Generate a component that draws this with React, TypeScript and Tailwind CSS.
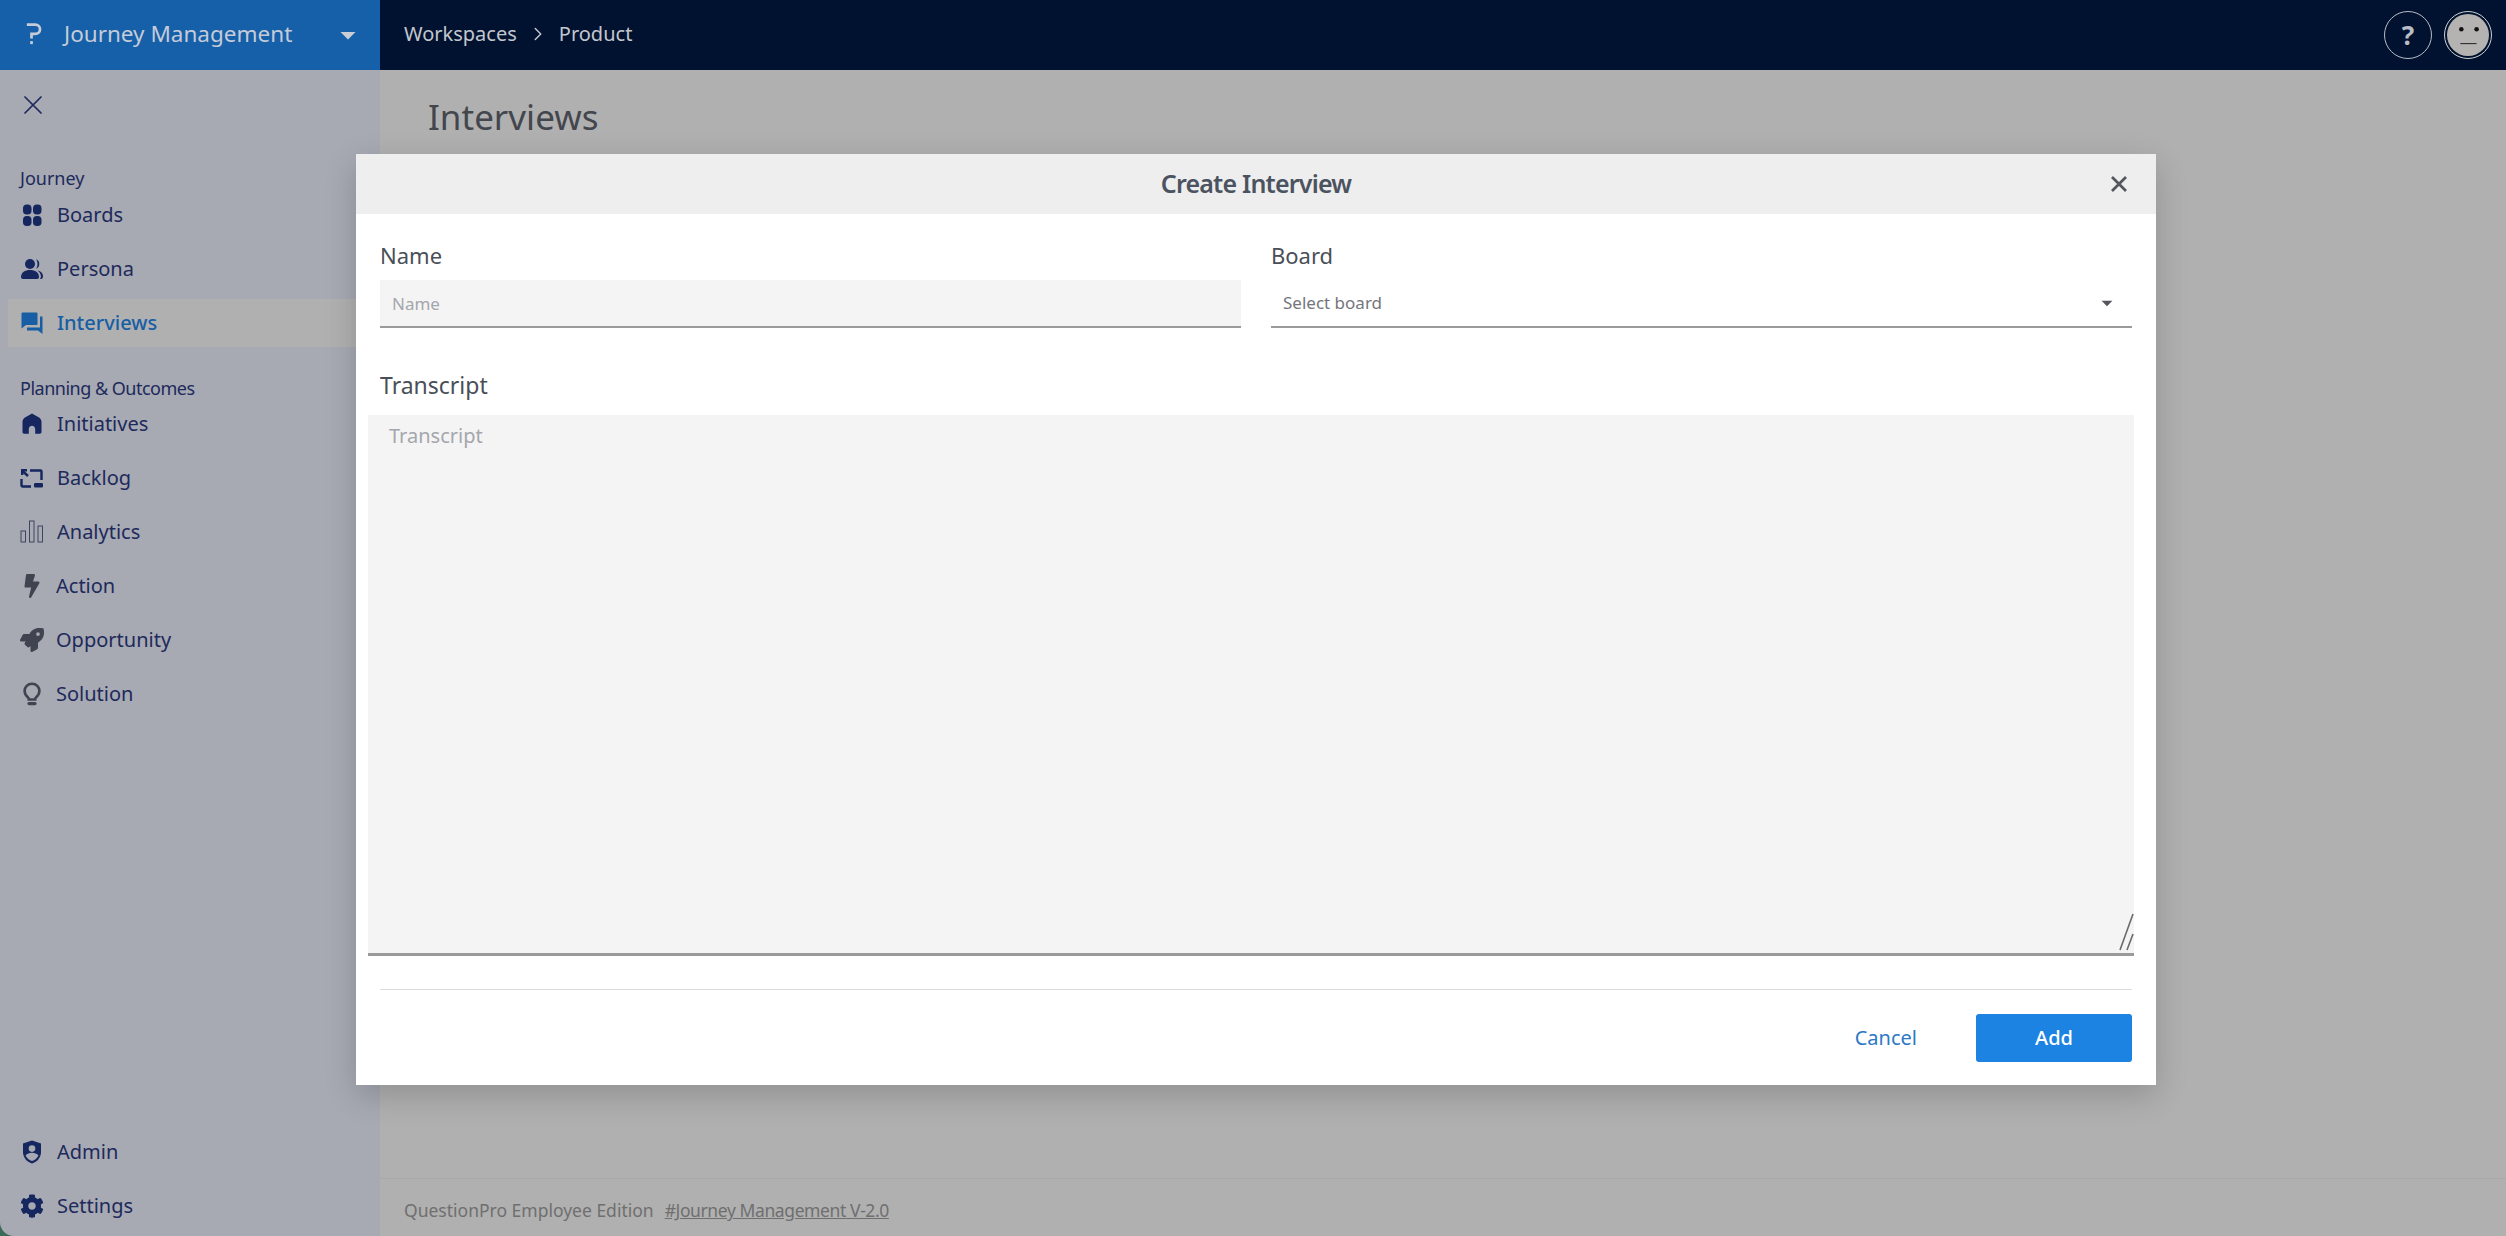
import React from "react";
import { MdArrowDropDown } from "react-icons/md";
import { FaBolt, FaRocket, FaCog } from "react-icons/fa";
import { LuX, LuChevronRight } from "react-icons/lu";

const BoardsIcon = () => (
  <svg viewBox="0 0 24 24" className="w-[24px] h-[24px]" fill="#16265f">
    <rect x="3" y="1.500" width="8.500" height="10" rx="3.800" />
    <rect x="13" y="1.500" width="8.500" height="10" rx="3.800" />
    <rect x="3" y="13" width="8.500" height="10" rx="3.800" />
    <rect x="13" y="13" width="8.500" height="10" rx="3.800" />
  </svg>
);
const PersonaIcon = () => (
  <svg viewBox="0 0 24 24" className="w-[26px] h-[26px]" fill="#16265f">
    <circle cx="10" cy="7" r="5" />
    <path d="M16 2.300a5 5 0 0 1 0 9.400c1-1.300 1.500-2.900 1.500-4.700S17 3.600 16 2.300z" />
    <path d="M1 20c0-4.500 4-7 9-7s9 2.500 9 7c0 1.300-.8 2-2 2H3c-1.200 0-2-.7-2-2z" />
    <path d="M17.500 13.400c3.300.5 5.500 2.600 5.500 5.800 0 1.600-.7 2.800-2 2.800h-1c.6-.7.900-1.500.900-2.500 0-2.500-1.200-4.500-3.400-6.100z" />
  </svg>
);
const ForumIcon = () => (
  <svg viewBox="0 0 24 24" className="w-[26px] h-[26px]" fill="#175ea5">
    <path d="M1.500 2.500a1 1 0 0 1 1-1h14a1 1 0 0 1 1 1v10.500a1 1 0 0 1-1 1H6l-4.500 3.500z" />
    <path d="M20 5.500h2.500v17.500l-4.500-3.500H7v-3h13z" />
  </svg>
);
const HomeIcon = () => (
  <svg viewBox="0 0 24 24" className="w-[24px] h-[24px]" fill="#16265f">
    <path d="M12 1.500 5 5.500C3.500 6.500 2.500 8 2.500 10v10c0 1 .7 1.700 1.700 1.700h4.600V17c0-1.800 1.400-3.200 3.200-3.200s3.200 1.400 3.200 3.200v4.700h4.600c1 0 1.700-.7 1.700-1.700V10c0-2-1-3.500-2.500-4.500z" />
  </svg>
);
const BacklogIcon = () => (
  <svg viewBox="0 0 24 24" className="w-[24px] h-[24px]" fill="none" stroke="#16265f" strokeWidth="2.400">
    <path d="M10 4.500h10.500a1 1 0 0 1 1 1V14" />
    <path d="M1.500 13v6a1.500 1.500 0 0 0 1.500 1.500h8" />
    <path d="M2.500 5l5.500 5" />
    <path d="M1 3h6v2.400H3.400V9H1z" fill="#16265f" stroke="none" />
    <rect x="14" y="17" width="9" height="4.500" rx="1.200" fill="#16265f" stroke="none" />
  </svg>
);
const BarsIcon = () => (
  <svg viewBox="0 0 24 24" className="w-[24px] h-[24px]" fill="none" stroke="#3d4660" strokeWidth="1">
    <rect x="1" y="11" width="4.500" height="11" />
    <rect x="9.500" y="1" width="4.500" height="21" />
    <rect x="18" y="6" width="4.500" height="16" />
  </svg>
);
const BulbIcon = () => (
  <svg viewBox="0 0 24 24" className="w-[24px] h-[24px]" fill="none" stroke="#3f4450" strokeWidth="2.600">
    <path d="M12 1.800c-4.300 0-7.400 3.200-7.400 7.200 0 2.800 1.500 4.600 3.200 6.200.7.700 1 1.300 1 2.300h6.400c0-1 .3-1.600 1-2.300 1.700-1.600 3.200-3.400 3.200-6.200 0-4-3.100-7.200-7.400-7.200z" />
    <path d="M9 21.600h6" strokeWidth="3.200" strokeLinecap="round" />
  </svg>
);
const AdminIcon = () => (
  <svg viewBox="0 0 24 24" className="w-[24px] h-[24px]">
    <path fill="#16265f" d="M12 .5 3 3.500v8.500c0 5.400 3.800 10 9 11.500 5.200-1.500 9-6.100 9-11.500V3.500z" />
    <circle cx="12" cy="8.600" r="3.300" fill="#a7a9b3" />
    <path fill="#a7a9b3" d="M5.500 15.500c1.500-2 4-2.800 6.500-2.800s5 .8 6.500 2.800c-1.300 2.600-3.700 4.700-6.500 5.500-2.800-.8-5.200-2.900-6.500-5.500z" />
  </svg>
);

const Row = ({ icon, label, active, gap }: { icon: React.ReactNode; label: string; active?: boolean; gap?: string }) => (
  <div className="flex items-center h-[54px] pl-[20px]">
    <div className={`flex items-center h-[48px] w-full -ml-[12px] pl-[12px] ${active ? "bg-[#b0b0b0] text-[#175ea5] font-medium" : "text-[#1d2a5b]"}`}>
      <span className="w-[24px] h-[24px] flex items-center justify-center shrink-0">{icon}</span>
      <span className={`text-[20px] leading-none ${gap ?? "ml-[13px]"}`}>{label}</span>
    </div>
  </div>
);

export default function App() {
  return (
    <div className="relative w-[2506px] h-[1236px] overflow-hidden flex flex-col bg-[#b0b0b0] font-['Noto_Sans',sans-serif]">
      <header className="h-[70px] flex shrink-0 bg-[#00122f]">
        <div className="w-[380px] bg-[#1560a8] flex items-center pl-[26px] pr-[20px] text-[#c5cbd8]">
          <svg viewBox="0 0 20 26" className="w-[17px] h-[23px] mr-[21px] -mt-[3px]" fill="none" stroke="#c5cbd8" strokeWidth="3.200">
            <path d="M1 2.500h10a5.500 5.500 0 0 1 0 11H6.500V19" />
            <path d="M6.500 22v3.500" />
          </svg>
          <span className="text-[22.500px] leading-none -mt-[2px]">Journey Management</span>
          <MdArrowDropDown className="ml-auto w-[36px] h-[36px] -mr-[6px] text-[#c9cdd6]" />
        </div>
        <div className="flex items-center pl-[24px] text-[#c3c6cd] text-[20px] -mt-[2px]">
          <span>Workspaces</span>
          <LuChevronRight className="w-[22px] h-[22px] mx-[10px]" strokeWidth={1.6} />
          <span>Product</span>
        </div>
        <div className="ml-auto flex items-center gap-[12px] pr-[14px]">
          <div className="w-[48px] h-[48px] rounded-full border border-[#b8bcc4] flex items-center justify-center text-[#b9bdc6] text-[26px] font-bold">?</div>
          <div className="w-[48px] h-[48px] rounded-full border border-[#d0d0d0] p-[2px]">
            <svg viewBox="0 0 44 44" className="w-full h-full">
              <circle cx="22" cy="22" r="22" fill="#b4b3b1" />
              <circle cx="15" cy="16" r="2.400" fill="#111" />
              <circle cx="31" cy="16" r="2.400" fill="#111" />
              <path d="M14 31h17" stroke="#333" strokeWidth="1.200" />
            </svg>
          </div>
        </div>
      </header>

      <div className="flex flex-1 min-h-0">
        <aside className="w-[380px] shrink-0 bg-[#3a6b58]">
          <div className="h-full flex flex-col bg-[#a7a9b3] rounded-bl-[14px] pb-[3px]">
            <div className="h-[68px] pl-[17px] pt-[19px]">
              <LuX className="w-[32px] h-[32px] text-[#1d2a5b]" strokeWidth={1.300} />
            </div>
            <div className="text-[18px] leading-none text-[#1d2a5b] pl-[20px] mt-[31px] mb-[1px]">Journey</div>
            <Row icon={<BoardsIcon />} label="Boards" gap="ml-[13px]" />
            <Row icon={<PersonaIcon />} label="Persona" gap="ml-[13px]" />
            <Row icon={<ForumIcon />} label="Interviews" active gap="ml-[13px]" />
            <div className="text-[18px] leading-none text-[#1d2a5b] pl-[20px] mt-[29px] tracking-[-0.500px]">Planning &amp; Outcomes</div>
            <Row icon={<HomeIcon />} label="Initiatives" gap="ml-[13px]" />
            <Row icon={<BacklogIcon />} label="Backlog" gap="ml-[13px]" />
            <Row icon={<BarsIcon />} label="Analytics" gap="ml-[13px]" />
            <Row icon={<FaBolt className="w-[22px] h-[24px] text-[#3f4450]" />} label="Action" gap="ml-[12px]" />
            <Row icon={<FaRocket className="w-[24px] h-[24px] text-[#3f4450]" />} label="Opportunity" gap="ml-[12px]" />
            <Row icon={<BulbIcon />} label="Solution" gap="ml-[12px]" />
            <div className="mt-auto" />
            <Row icon={<AdminIcon />} label="Admin" gap="ml-[13px]" />
            <Row icon={<FaCog className="w-[24px] h-[24px] text-[#16265f]" />} label="Settings" gap="ml-[13px]" />
          </div>
        </aside>
        <main className="flex-1 flex flex-col min-w-0">
          <div className="flex-1 pl-[48px] pt-[25px]">
            <h1 className="text-[35px] leading-[44px] text-[#43464d]">Interviews</h1>
          </div>
          <footer className="h-[58px] border-t border-[#a9a9a9] flex items-center pt-[6px] pl-[24px] text-[17.500px] text-[#6f6f6f]">
            <span>QuestionPro Employee Edition</span>
            <span className="ml-[11px] underline tracking-[-0.400px]">#Journey Management V-2.0</span>
          </footer>
        </main>
      </div>

      <div className="absolute left-[356px] top-[154px] w-[1800px] h-[931px] bg-white flex flex-col shadow-[0_10px_30px_rgba(0,0,0,0.18)]">
        <div className="h-[60px] bg-[#eeeeee] relative flex items-center justify-center shrink-0">
          <span className="text-[25px] font-semibold tracking-[-0.800px] text-[#4c5360]">Create Interview</span>
          <svg viewBox="0 0 16 16" className="absolute right-[29px] top-[22px] w-[16px] h-[16px]" fill="none" stroke="#53565c" strokeWidth="2.800">
            <path d="M1 1l14 14M15 1 1 15" />
          </svg>
        </div>
        <div className="flex-1 flex flex-col px-[24px]">
          <div className="flex gap-[30px] mt-[26px]">
            <label className="flex-1 flex flex-col">
              <span className="text-[22px] leading-[30px] text-[#4a4f57] mb-[10px]">Name</span>
              <input placeholder="Name" className="h-[48px] bg-[#f4f4f4] border-b-2 border-[#9a9a9a] px-[12px] text-[17px] outline-none placeholder:text-[#a4a6ad]" />
            </label>
            <label className="flex-1 flex flex-col">
              <span className="text-[22px] leading-[30px] text-[#4a4f57] mb-[10px]">Board</span>
              <div className="h-[48px] border-b-2 border-[#9a9a9a] px-[12px] flex items-center justify-between text-[17px] text-[#74767c]">
                <span>Select board</span>
                <MdArrowDropDown className="w-[26px] h-[26px] text-[#53565c] mr-[0px]" />
              </div>
            </label>
          </div>
          <span className="text-[23px] leading-[30px] text-[#4a4f57] mt-[42px] mb-[15px]">Transcript</span>
          <div className="relative -ml-[12px] -mr-[2px]">
            <textarea placeholder="Transcript" className="block w-full h-[541px] bg-[#f4f4f4] border-b-[3px] border-[#9a9a9a] px-[21px] py-[6px] text-[20px] leading-[30px] resize-none outline-none placeholder:text-[#a4a6ad]" />
            <svg viewBox="0 0 16 40" className="absolute right-0 bottom-[4px] w-[16px] h-[40px]" fill="none" stroke="#6a6a6a" strokeWidth="1.600">
              <path d="M2 38 15 2M9 38l6-16" />
            </svg>
          </div>
          <div className="mt-[33px] border-t border-[#dcdcdc]" />
          <div className="flex items-center justify-end mt-[24px]">
            <span className="text-[20px] text-[#2c78c4] mr-[59px]">Cancel</span>
            <button className="w-[156px] h-[48px] rounded-[3px] bg-[#1c83e2] text-white text-[20px] font-medium">Add</button>
          </div>
        </div>
      </div>
    </div>
  );
}
